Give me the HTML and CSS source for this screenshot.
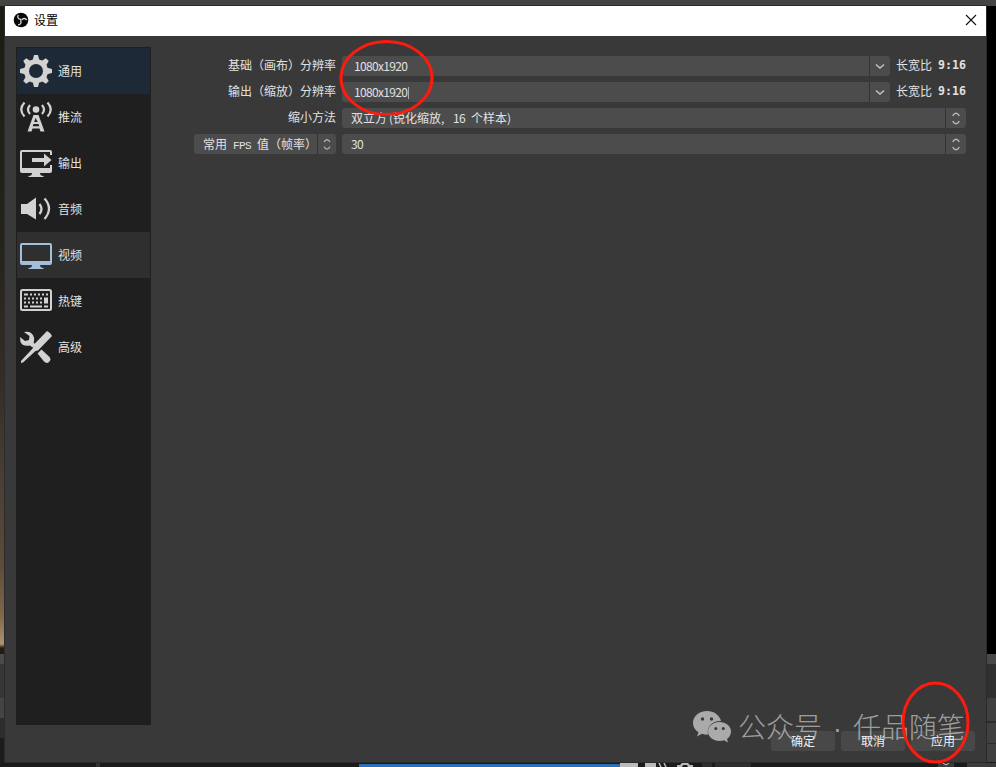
FILE: index.html
```html
<!DOCTYPE html>
<html lang="zh-CN">
<head>
    <meta charset="UTF-8">
    <meta name="viewport" content="width=device-width, initial-scale=1.0">
    <title>设置</title>
    <link rel="stylesheet" href="styles.css">
</head>
<body>
    <svg width="0" height="0" class="defs">
        <symbol id="down" viewBox="0 0 20 20"><path d="M6 8.5l4 3.500 4-3.500" fill="none" stroke="#c4c4c4" stroke-width="1.5"/></symbol>
        <symbol id="updown" viewBox="0 0 20 20"><path d="M6.8 8q.5-2 3.200-2.800 2.700.8 3.200 2.800M6.800 13q.5 2 3.200 2.800 2.700-.8 3.200-2.800" fill="none" stroke="#bbb" stroke-width="1.3"/></symbol>
    </svg>
    <div class="edge-left"></div>
    <div class="edge-right"></div>
    <div class="edge-bottom">
        <i class="divider"></i>
        <i class="slider"></i>
        <svg width="376" height="4" viewBox="620 763 376 4">
            <path fill="#bbb" d="M620 763h18v4h-18zM645 763h11v4h-11z"/>
            <path d="M659 763l2 4M664 763l2 4" fill="none" stroke="#bbb" stroke-width="1.500"/>
            <path d="M677 767v-2h3l2-2h6l2 2h3v2h-5l-1-2h-4l-1 2z" fill="#bbb"/>
            <path fill="#2e2e2e" d="M702 763h10v4h-10zM715 763h36v4h-36z"/>
            <path fill="#3c3c3c" d="M938 763h16v4h-16zM967 763h29v4h-29z"/>
            <path d="M943 763l3 2 3-2" fill="none" stroke="#ccc"/>
        </svg>
    </div>

    <div class="dialog">
        <div class="titlebar">
            <svg class="logo" width="16" height="16" viewBox="0 0 16 16">
                <circle cx="8" cy="8" r="7.3" fill="#080808"/>
                <g fill="none" stroke="#ddd" stroke-width="1.3">
                    <path id="blade" d="M8 7.5C5.2 7.3 4 5.2 5.3 3"/>
                    <use href="#blade" transform="rotate(120 8 8)"/>
                    <use href="#blade" transform="rotate(240 8 8)"/>
                </g>
            </svg>
            <span>设置</span>
            <svg class="close" width="12" height="12" viewBox="0 0 12 12"><path d="M1 1l10 10M11 1L1 11" stroke="#111" stroke-width="1.1"/></svg>
        </div>

        <div class="content">
            <div class="sidebar">
                <div class="item current">
                    <svg width="32" height="32" viewBox="0 0 32 32">
                        <g fill="#d2d2d2">
                            <path id="teeth" d="M12.500 6L14 0h4l1.500 6v20L18 32h-4l-1.500-6z"/>
                            <use href="#teeth" transform="rotate(45 16 16)"/>
                            <use href="#teeth" transform="rotate(90 16 16)"/>
                            <use href="#teeth" transform="rotate(135 16 16)"/>
                            <circle cx="16" cy="16" r="12"/>
                        </g>
                        <circle cx="16" cy="16" r="7" fill="#1d2936"/>
                    </svg>
                    <span>通用</span>
                </div>
                <div class="item">
                    <svg width="32" height="32" viewBox="0 0 32 32">
                        <circle cx="16" cy="8.500" r="3.3" fill="#d2d2d2"/>
                        <path d="M10 4q-4 4.500 0 9M22 4q4 4.500 0 9M4.500 1.500q-6.500 7 0 14M27.500 1.500q6.500 7 0 14" fill="none" stroke="#d2d2d2" stroke-width="2.2"/>
                        <path d="M13.500 14h5l6 16.500h-4l-1-3h-7l-1 3h-4zM15.500 17l-1.300 4h3.600zM13.500 23l-.8 2.200h6.600l-.8-2.200z" fill="#d2d2d2" fill-rule="evenodd"/>
                    </svg>
                    <span>推流</span>
                </div>
                <div class="item">
                    <svg width="32" height="32" viewBox="0 0 32 32">
                        <path d="M2 3h28q2 0 2 2v3h-2V5H2v16h28v-3h2v6q0 2-2 2H20q0 3 3.5 3v1H8.500v-1Q12 29 12 26H2q-2 0-2-2V5q0-2 2-2z" fill="#d2d2d2"/>
                        <path d="M12 11h12V6.500L31.500 13 24 19.500V15H12z" fill="#d2d2d2"/>
                    </svg>
                    <span>输出</span>
                </div>
                <div class="item">
                    <svg width="32" height="32" viewBox="0 0 32 32">
                        <path d="M1 11h6l9-6.500v22L7 21H1z" fill="#d2d2d2"/>
                        <path d="M19.500 11q4 5 0 10M24.500 5.500q9 10 0 20.500" fill="none" stroke="#d2d2d2" stroke-width="2.300"/>
                    </svg>
                    <span>音频</span>
                </div>
                <div class="item selected">
                    <svg width="32" height="32" viewBox="0 0 32 32">
                        <path d="M2 4h28q2 0 2 2v18q0 2-2 2H20q0 3 3.500 3v1H8.500v-1Q12 29 12 26H2q-2 0-2-2V6q0-2 2-2zM2 6v16h28V6z" fill="#a2bedb" fill-rule="evenodd"/>
                    </svg>
                    <span>视频</span>
                </div>
                <div class="item">
                    <svg width="32" height="32" viewBox="0 0 32 32">
                        <rect x="1" y="5" width="30" height="20" rx="1.500" fill="none" stroke="#d2d2d2" stroke-width="2"/>
                        <path d="M4 9.500h24" stroke="#d2d2d2" stroke-width="2" stroke-dasharray="4 2 2 2 2 2 2 2 2 2 2 9"/>
                        <path d="M4 13.500h20M8 17.500h16" stroke="#d2d2d2" stroke-width="2" stroke-dasharray="2 2"/>
                        <path d="M4 17.500h2M4 21.500h4M10 21.500h12M24 21.500h4" stroke="#d2d2d2" stroke-width="2"/>
                        <path d="M24 12.500h4v6h-4z" fill="#d2d2d2"/>
                    </svg>
                    <span>热键</span>
                </div>
                <div class="item">
                    <svg width="32" height="32" viewBox="0 0 32 32">
                        <g fill="#d2d2d2">
                            <path d="M4 1q8-1.500 10 5.500.5 3-.5 5l2 2-3 3-2.500-2Q3 16 .5 11L0 6l5 4 4-1 .5-4z"/>
                            <path d="M27 0q3.500 1.500 5 5L18 19.500l-2.500.5L3 31.500l-2 .5v-2l12-13 .5-3z"/>
                            <path d="M17.500 22.500l4-4 8 7.500q2 3-.5 5t-5-.5z"/>
                        </g>
                    </svg>
                    <span>高级</span>
                </div>
            </div>

            <div class="form">
                <div class="row">
                    <label>基础（画布）分辨率</label>
                    <div class="field editable"><span>1080x1920</span><svg class="arrow"><use href="#down"/></svg></div>
                    <div class="ratio">长宽比 <b>9:16</b></div>
                </div>
                <div class="row">
                    <label>输出（缩放）分辨率</label>
                    <div class="field editable"><span class="caret">1080x1920</span><svg class="arrow"><use href="#down"/></svg></div>
                    <div class="ratio">长宽比 <b>9:16</b></div>
                </div>
                <div class="row">
                    <label>缩小方法</label>
                    <div class="field"><span>双立方<em class="open">(</em>锐化缩放<em class="comma">, </em><em class="num">16</em><em class="space"> </em>个样本<em>)</em></span><svg class="arrow"><use href="#updown"/></svg></div>
                </div>
                <div class="row">
                    <div class="field fps"><span>常用 <tt>FPS</tt> 值（帧率）</span><svg class="arrow"><use href="#updown"/></svg></div>
                    <div class="field"><span><em class="num">30</em></span><svg class="arrow"><use href="#updown"/></svg></div>
                </div>
            </div>
        </div>

        <div class="footer">
            <button>确定</button>
            <button>取消</button>
            <button>应用</button>
        </div>
    </div>

    <div class="watermark">
        <svg width="38" height="32" viewBox="0 0 38 32">
            <path d="M14 0C6 0 0 5.300 0 12c0 4 2 7 5.500 9.200L4 25.500l5-2.700q3 1 6 .8C13.500 15 20 9.500 28 10 26.500 4 21 0 14 0z"/>
            <path d="M26.500 11C20 11 15 15.300 15 20.500S20 30 26.500 30q2.500 0 4.500-.8l4 2.300-1-3.500c2.500-2 4-4.500 4-7.500C38 15.300 33 11 26.500 11z"/>
            <g fill="#393939"><circle cx="9.500" cy="8" r="1.700"/><circle cx="18.500" cy="8" r="1.700"/><circle cx="22.800" cy="17.500" r="1.500"/><circle cx="30.300" cy="17.500" r="1.500"/></g>
        </svg>
        <span>公众号<i>·</i>任品随笔</span>
    </div>

    <svg class="marks" width="996" height="767" viewBox="0 0 996 767">
        <ellipse cx="386.500" cy="78" rx="45.500" ry="36.500"/>
        <ellipse cx="935.500" cy="722.500" rx="32.500" ry="39.500"/>
    </svg>
</body>
</html>
```

FILE: styles.css
```css
* {
    box-sizing: border-box;
}
body {
    position: relative;
    width: 996px;
    height: 767px;
    margin: 0;
    padding: 6px 0 0 5px;
    overflow: hidden;
    background: #444;
    color: #e1e1e1;
    font: 12px "Liberation Sans", "Noto Sans CJK SC", sans-serif;
}
.defs {
    position: absolute;
}

/* main window showing behind the dialog */
.edge-left {
    position: absolute;
    left: 0;
    top: 6px;
    width: 5px;
    height: 761px;
    background: linear-gradient(#1b1c14 0, #25231a 240px, #352e26 380px, #4b4035 480px, #5c4c39 560px, #80694b 610px, #b09270 638px, #211c10 642px, #211c10 648px, #4a4a4a 648px, #4a4a4a 658px, #373737 658px, #373737 692px, #444 692px, #444 712px, #2d2d2d 712px, #2d2d2d 732px, #1c1c1c 732px);
}
.edge-right {
    position: absolute;
    left: 986px;
    top: 6px;
    width: 10px;
    height: 761px;
    background: linear-gradient(#000 648px, #494949 648px, #494949 658px, #303030 658px, #303030 692px, #404040 692px, #404040 715px, #2c2c2c 715px, #2c2c2c 717px, #404040 717px, #404040 737px, #2c2c2c 737px, #2c2c2c 738px, #404040 738px);
}
.edge-bottom {
    position: absolute;
    left: 0;
    bottom: 0;
    display: flex;
    width: 996px;
    height: 5px;
    padding-top: 1px;
    background: #1b1b1b;
}
.divider {
    width: 4px;
    margin-left: 96px;
    background: #333;
}
.slider {
    width: 261px;
    margin: 1px 0 0 259px;
    background: #2871b8;
}

.dialog {
    position: relative;
    display: flex;
    flex-direction: column;
    width: 981px;
    height: 756px;
    background: #393939;
    box-shadow: 0 0 0 1px #2b2b2b;
}
.titlebar {
    display: flex;
    align-items: center;
    height: 30px;
    padding: 0 9px 2px 8px;
    background: #fff;
    color: #000;
}
.titlebar span {
    margin-top: -1px;
}
.logo {
    margin-right: 5px;
}
.close {
    margin-left: auto;
}
.content {
    display: flex;
    height: 689px;
    padding: 11px 20px 0 11px;
}
.sidebar {
    width: 135px;
    height: 678px;
    padding: 1px;
    background: #1f1f1f;
}
.item {
    display: flex;
    align-items: center;
    gap: 6px;
    height: 46px;
    padding-left: 3px;
}
.item span {
    padding-bottom: 2px;
}
.item.current {
    background: #1d2936;
}
.item.selected {
    background: #2f2f2f;
}
.form {
    display: flex;
    flex: 1;
    flex-direction: column;
    gap: 6px;
    margin-left: 43px;
    padding-top: 9px;
}
.row {
    display: flex;
    gap: 6px;
    height: 20px;
    line-height: 20px;
    white-space: pre;
}
.row label {
    width: 142px;
    text-align: right;
}
.field {
    display: flex;
    flex: 1;
    padding-left: 9px;
    border-radius: 3px;
    background: #4c4c4c;
    overflow: hidden;
}
.field > span {
    flex: 1;
    font-family: "Noto Sans CJK SC", sans-serif;
}
.editable {
    padding-left: 12px;
}
.editable > span {
    letter-spacing: -0.66px;
}
.caret::after {
    content: "";
    display: inline-block;
    width: 1px;
    height: 12px;
    margin-left: 1px;
    background: #aaa;
    vertical-align: -2px;
}
.fps {
    flex: none;
    width: 142px;
}
.arrow {
    width: 21px;
    height: 20px;
    border-left: 1px solid #333;
}

/* latin characters sit on a 6px half-width grid */
.field em {
    font-style: normal;
}
.field .open {
    padding-left: 1.9px;
}
.field .comma {
    letter-spacing: 3px;
}
.field .num {
    letter-spacing: -0.66px;
}
.field .space {
    letter-spacing: 3.3px;
}
.field tt {
    margin: 0 3.3px;
    font: 11px "Liberation Mono", monospace;
    letter-spacing: -0.6px;
}
.ratio {
    width: 70px;
    display: flex;
    justify-content: space-between;
}
.ratio b {
    font: bold 11.6px/19px "DejaVu Sans Mono", monospace;
}
.footer {
    display: flex;
    justify-content: flex-end;
    gap: 6px;
    padding: 6px 11px 0 0;
}
button {
    width: 64px;
    height: 20px;
    padding: 0;
    border: 0;
    border-radius: 3px;
    background: #484848;
    color: #f0f0f0;
    font: 12px/20px "Noto Sans CJK SC", sans-serif;
}

.watermark {
    position: absolute;
    left: 693px;
    top: 706px;
    display: flex;
    gap: 7px;
    color: rgba(255, 255, 255, 0.52);
    font: 300 28px/40px "Noto Sans CJK SC", sans-serif;
    white-space: nowrap;
}
.watermark svg {
    margin-top: 5px;
    fill: #aaa;
}
.watermark i {
    display: inline-block;
    width: 31px;
    font-family: "Liberation Sans", sans-serif;
    font-style: normal;
    text-align: center;
}
.marks {
    position: absolute;
    left: 0;
    top: 0;
    fill: none;
    stroke: #fb1c10;
    stroke-width: 3;
}
```
